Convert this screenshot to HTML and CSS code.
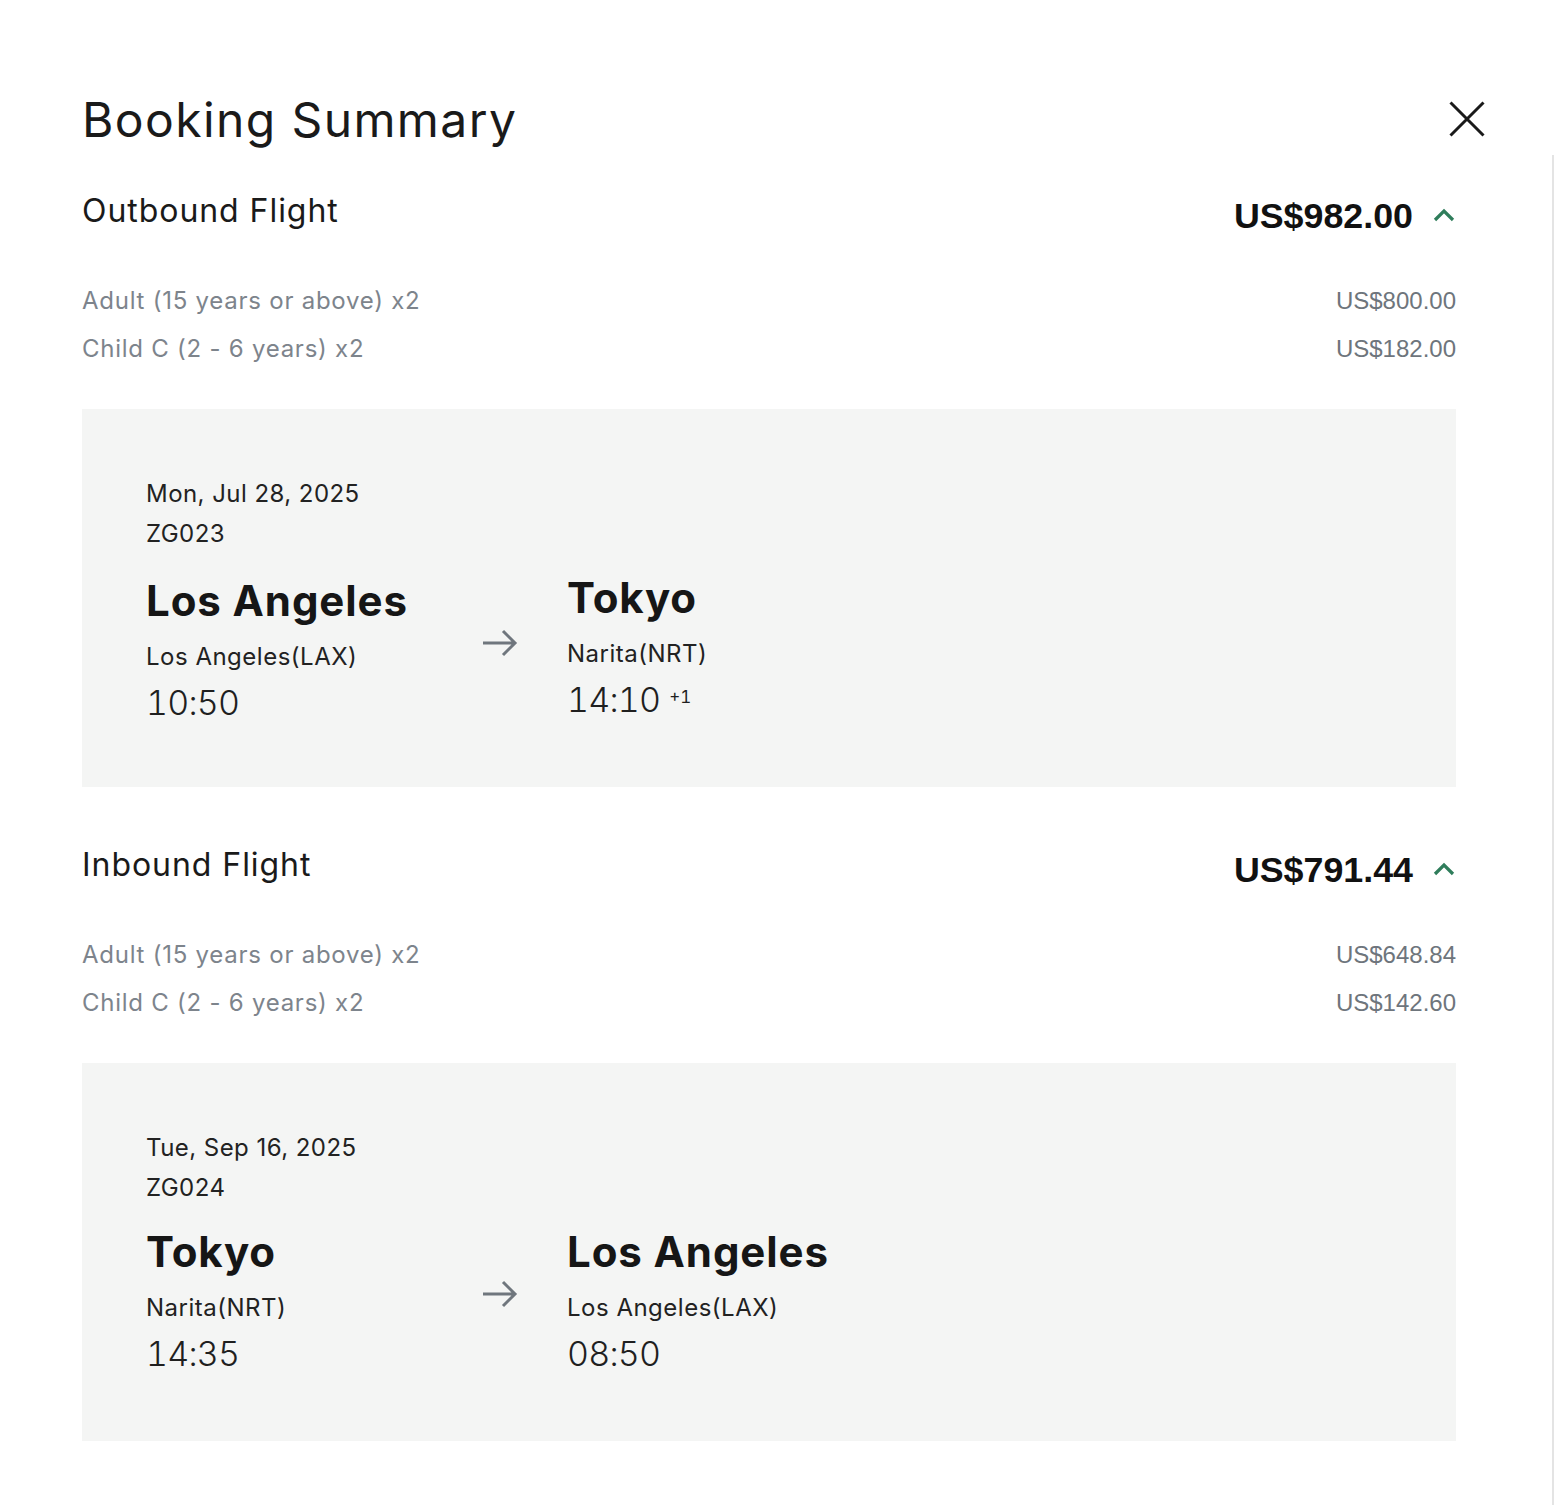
FILE: index.html
```html
<!DOCTYPE html>
<html lang="en">
<head>
<meta charset="utf-8">
<title>Booking Summary</title>
<link rel="stylesheet" href="styles.css">
</head>
<body>
<div class="panel">
  <header class="panel-head">
    <h1 class="panel-title">Booking Summary</h1>
    <button class="close-btn" aria-label="Close">
      <svg width="36" height="36" viewBox="0 0 36 36"><path d="M1.5 1.5 L34.5 34.5 M34.5 1.5 L1.5 34.5" stroke="#1a1a1a" stroke-width="3" fill="none"/></svg>
    </button>
  </header>

  <section class="leg">
    <div class="leg-head">
      <h2 class="leg-title">Outbound Flight</h2>
      <div class="leg-total">
        <span class="total-amount">US$982.00</span>
        <svg class="chevron" width="22" height="14" viewBox="0 0 22 14"><path d="M2 12 L11 3 L20 12" stroke="#2f7d5b" stroke-width="3.2" fill="none"/></svg>
      </div>
    </div>
    <ul class="fare-list">
      <li class="fare-row"><span class="fare-label">Adult (15 years or above) x2</span><span class="fare-price">US$800.00</span></li>
      <li class="fare-row"><span class="fare-label">Child C (2 - 6 years) x2</span><span class="fare-price">US$182.00</span></li>
    </ul>
    <div class="flight-card">
      <div class="flight-date">Mon, Jul 28, 2025</div>
      <div class="flight-no">ZG023</div>
      <div class="route">
        <div class="stop">
          <div class="city">Los Angeles</div>
          <div class="airport">Los Angeles(LAX)</div>
          <div class="time">10:50</div>
        </div>
        <svg class="route-arrow" width="36" height="28" viewBox="0 0 36 28"><path d="M1 14 H33 M21 2 L33 14 L21 26" stroke="#6f767d" stroke-width="3" fill="none"/></svg>
        <div class="stop">
          <div class="city">Tokyo</div>
          <div class="airport">Narita(NRT)</div>
          <div class="time">14:10<sup class="day-offset">+1</sup></div>
        </div>
      </div>
    </div>
  </section>

  <section class="leg">
    <div class="leg-head">
      <h2 class="leg-title">Inbound Flight</h2>
      <div class="leg-total">
        <span class="total-amount">US$791.44</span>
        <svg class="chevron" width="22" height="14" viewBox="0 0 22 14"><path d="M2 12 L11 3 L20 12" stroke="#2f7d5b" stroke-width="3.2" fill="none"/></svg>
      </div>
    </div>
    <ul class="fare-list">
      <li class="fare-row"><span class="fare-label">Adult (15 years or above) x2</span><span class="fare-price">US$648.84</span></li>
      <li class="fare-row"><span class="fare-label">Child C (2 - 6 years) x2</span><span class="fare-price">US$142.60</span></li>
    </ul>
    <div class="flight-card">
      <div class="flight-date">Tue, Sep 16, 2025</div>
      <div class="flight-no">ZG024</div>
      <div class="route">
        <div class="stop">
          <div class="city">Tokyo</div>
          <div class="airport">Narita(NRT)</div>
          <div class="time">14:35</div>
        </div>
        <svg class="route-arrow" width="36" height="28" viewBox="0 0 36 28"><path d="M1 14 H33 M21 2 L33 14 L21 26" stroke="#6f767d" stroke-width="3" fill="none"/></svg>
        <div class="stop">
          <div class="city">Los Angeles</div>
          <div class="airport">Los Angeles(LAX)</div>
          <div class="time">08:50</div>
        </div>
      </div>
    </div>
  </section>
  <div class="scroll-track"></div>
</div>
</body>
</html>
```

FILE: styles.css
```css
* { box-sizing: border-box; }
html, body { margin: 0; padding: 0; background: #fff; }
body {
  font-family: Inter, "Noto Sans CJK JP", sans-serif;
  color: #1a1a1a;
}
.panel {
  position: relative;
  min-height: 1505px;
  padding: 84px 98px 60px 82px;
}
.panel-head {
  display: flex;
  justify-content: space-between;
  align-items: center;
  margin-right: -30px;
}
.panel-title {
  margin: 0;
  font-size: 48px;
  font-weight: 400;
  line-height: 72px;
  letter-spacing: 1.4px;
}
.close-btn {
  border: 0;
  background: none;
  padding: 0;
  width: 36px;
  height: 36px;
  display: block;
  margin-top: -2px;
  margin-right: 1px;
}
.close-btn svg { display: block; }

.leg { margin-top: 31px; }
.leg + .leg { margin-top: 54px; }
.leg-head {
  display: flex;
  justify-content: space-between;
  align-items: flex-start;
  height: 53px;
}
.leg-title {
  margin: 0;
  font-size: 32px;
  font-weight: 400;
  line-height: 48px;
  letter-spacing: 0.95px;
}
.leg-total {
  display: flex;
  align-items: center;
  gap: 20px;
  padding-top: 5px;
  height: 53px;
}
.total-amount {
  font-family: "Liberation Sans", Arial, sans-serif;
  font-weight: 700;
  font-size: 35.8px;
  line-height: 48px;
  color: #111;
}
.chevron { display: block; margin-top: -2px; margin-right: 1px; }

.fare-list {
  list-style: none;
  margin: 36px 0 0;
  padding: 0;
}
.fare-row {
  display: flex;
  justify-content: space-between;
  align-items: center;
  height: 48px;
}
.fare-label {
  font-size: 24px;
  color: #7d848c;
  letter-spacing: 0.75px;
}
.fare-price {
  font-family: "Liberation Sans", Arial, sans-serif;
  font-size: 24px;
  color: #6e757c;
  padding-top: 2px;
}

.flight-card {
  margin-top: 37px;
  background: #f4f5f4;
  height: 378px;
  padding: 65px 64px 0;
}
.flight-date, .flight-no {
  font-size: 24px;
  line-height: 40px;
  color: #222;
  letter-spacing: 0.45px;
}
.route {
  display: grid;
  grid-template-columns: 287px 36px auto;
  column-gap: 49px;
  align-items: center;
  margin-top: 14px;
}
.route-arrow { display: block; margin-bottom: 12px; }
.city {
  font-size: 42px;
  font-weight: 700;
  line-height: 60px;
  color: #161616;
  letter-spacing: 0.9px;
}
.airport {
  font-size: 24px;
  line-height: 40px;
  margin-top: 6px;
  color: #222;
  letter-spacing: 0.5px;
}
.time {
  font-size: 34px;
  font-weight: 300;
  line-height: 48px;
  margin-top: 2px;
  color: #1f1f1f;
  font-variant-numeric: tabular-nums;
  letter-spacing: -0.8px;
}
.day-offset {
  font-size: 17px;
  font-weight: 400;
  margin-left: 9px;
  vertical-align: 0;
  position: relative;
  top: -9px;
  letter-spacing: 0;
}
.scroll-track {
  position: absolute;
  top: 155px;
  right: 0;
  bottom: 0;
  width: 2px;
  background: #e4e4e4;
}
```
